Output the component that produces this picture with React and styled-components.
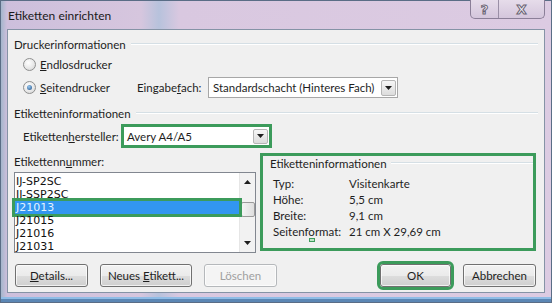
import React from "react";
import styled, { createGlobalStyle } from "styled-components";

const GlobalStyle = createGlobalStyle`
  html, body {
    margin: 0;
    padding: 0;
    background: #ffffff;
  }
  body {
    width: 552px;
    height: 303px;
    overflow: hidden;
    font-family: "Lato", "Liberation Sans", sans-serif;
    font-size: 11.5px;
    color: #1e1e1e;
  }
  * {
    box-sizing: border-box;
  }
`;

const GREEN = "#3c9b5b";

const Window = styled.div`
  width: 552px;
  height: 303px;
  display: flex;
  flex-direction: column;
  border: 1px solid #5a6d86;
  background: linear-gradient(
      90deg,
      #a4b6cc 0,
      #cdbfdc 6px,
      #d6c6de 140px,
      #b7c2dc 158px,
      #d9c8e0 178px,
      #dccbe2 100%
    );
  box-shadow: inset 0 -3px 0 #5b86b4, inset 0 -5px 0 #8fbce6;
`;

const TitleBar = styled.div`
  height: 28px;
  display: flex;
  justify-content: space-between;
  align-items: flex-start;
  padding-left: 7px;
`;

const Caption = styled.div`
  height: 28px;
  display: flex;
  align-items: center;
  font-size: 12px;
  color: #1a1a1a;
`;

const CaptionButtons = styled.div`
  display: flex;
  height: 19px;
  margin-top: -1px;
  margin-right: 6px;
  border: 1px solid #8b7f98;
  border-top: none;
  border-radius: 0 0 5px 5px;
  background: linear-gradient(#e6dcea, #d4c6dc);
  overflow: hidden;
`;

const CaptionButton = styled.div`
  width: ${(p) => p.$w}px;
  display: flex;
  align-items: center;
  justify-content: center;
  border-left: ${(p) => (p.$first ? "none" : "1px solid #9a8fa6")};
  font-family: "DejaVu Sans", sans-serif;
  font-weight: bold;
  font-size: ${(p) => p.$size}px;
  color: #f6f2f8;
  -webkit-text-stroke: 1px #6a6373;
`;

const Client = styled.div`
  flex: 1;
  margin: 0 6px 9px 6px;
  border: 1px solid #8593a6;
  background: #f0f0f0;
  padding: 6px 6px 0 6px;
  display: flex;
  flex-direction: column;
`;

const GroupHeader = styled.div`
  height: 16px;
  display: flex;
  align-items: center;
  gap: 5px;
  margin-top: ${(p) => p.$top || 0}px;
`;

const HeaderLine = styled.div`
  flex: 1;
  height: 2px;
  border-top: 1px solid #d5dfe5;
  border-bottom: 1px solid #ffffff;
`;

const Row = styled.div`
  display: flex;
  align-items: center;
  height: ${(p) => p.$h}px;
  margin-top: ${(p) => p.$top || 0}px;
  padding-left: 9px;
`;

const RadioLabel = styled.div`
  display: flex;
  align-items: center;
  gap: 4px;
  width: ${(p) => p.$w || 120}px;
`;

const RadioCircle = styled.span`
  width: 13px;
  height: 13px;
  border-radius: 50%;
  border: 1px solid #8e8f8f;
  background: radial-gradient(
    circle at 40% 35%,
    #ffffff 0,
    #e8e8e8 55%,
    #cfcfcf 100%
  );
  display: inline-flex;
  align-items: center;
  justify-content: center;
`;

const RadioDot = styled.span`
  width: 5px;
  height: 5px;
  border-radius: 50%;
  background: radial-gradient(circle at 40% 35%, #9ccaf0, #1d4f88);
`;

const U = styled.span`
  text-decoration: underline;
`;

const FieldLabel = styled.div`
  width: ${(p) => p.$w}px;
`;

const Select = styled.div`
  width: ${(p) => p.$w}px;
  height: ${(p) => p.$h}px;
  display: flex;
  align-items: center;
  justify-content: space-between;
  background: #ffffff;
  border: ${(p) => (p.$mark ? `3px solid ${GREEN}` : "1px solid #a7a7a7")};
  padding: 0 1px 0 ${(p) => (p.$mark ? 3 : 4)}px;
`;

const DropButton = styled.div`
  width: 15px;
  height: ${(p) => p.$h}px;
  display: flex;
  align-items: center;
  justify-content: center;
  border: 1px solid #b5b5b5;
  border-radius: 2px;
  background: linear-gradient(#f6f6f6, #dcdcdc);
`;

const Arrow = ({ up }) => (
  <svg width="7" height="4" viewBox="0 0 7 4">
    <path d={up ? "M0 4 L3.5 0 L7 4 Z" : "M0 0 L7 0 L3.5 4 Z"} fill="#1e1e1e" />
  </svg>
);

const Lower = styled.div`
  display: flex;
  gap: 4px;
  margin-top: 5px;
`;

const LeftColumn = styled.div`
  width: 242px;
  display: flex;
  flex-direction: column;
`;

const ListLabel = styled.div`
  height: 16px;
  display: flex;
  align-items: center;
`;

const ListBox = styled.div`
  margin-top: 3px;
  height: 81px;
  border: 1px solid #828790;
  background: #ffffff;
  display: flex;
`;

const Items = styled.div`
  flex: 1;
  padding-top: 2px;
  font-family: "DejaVu Sans", sans-serif;
  font-size: 11px;
`;

const Item = styled.div`
  height: 13px;
  line-height: 13px;
  padding-left: 1px;
  color: ${(p) => (p.$sel ? "#e4f3ff" : "#111111")};
  background: ${(p) => (p.$sel ? "#3296f0" : "transparent")};
  outline: ${(p) => (p.$sel ? `3px solid ${GREEN}` : "none")};
  position: relative;
`;

const ScrollBar = styled.div`
  width: 16px;
  display: flex;
  flex-direction: column;
  align-items: center;
  background: #f2f2f2;
  border-left: 1px solid #e6e6e6;
  padding: 7px 0 7px 0;
`;

const Thumb = styled.div`
  width: 14px;
  height: 15px;
  margin-top: 18px;
  border: 1px solid #9a9a9a;
  border-radius: 2px;
  background: linear-gradient(90deg, #f4f4f4, #dedede);
`;

const ScrollSpacer = styled.div`
  flex: 1;
`;

const InfoPanel = styled.div`
  position: relative;
  width: 276px;
  height: 98px;
  border: 3px solid ${GREEN};
  padding: 0 0 0 7px;
`;

const InfoTitle = styled.div`
  height: 14px;
  display: flex;
  align-items: center;
  gap: 4px;
`;

const InfoRows = styled.div`
  margin-top: 5px;
  padding-left: 3px;
`;

const InfoRow = styled.div`
  height: 16px;
  display: flex;
  align-items: center;
`;

const InfoKey = styled.div`
  width: 76px;
`;

const FocusMark = styled.div`
  position: absolute;
  left: 46px;
  top: 82px;
  width: 6px;
  height: 4px;
  border: 1.5px solid ${GREEN};
  background: #bfe5c8;
`;

const Buttons = styled.div`
  display: flex;
  align-items: center;
  margin-top: 11px;
  padding: 0 2px 0 1px;
  gap: 12px;
`;

const Button = styled.div`
  width: ${(p) => p.$w}px;
  height: 23px;
  display: flex;
  align-items: center;
  justify-content: center;
  border: 1px solid ${(p) => (p.$disabled ? "#b5b8bb" : "#707070")};
  border-radius: 3px;
  background: ${(p) =>
    p.$disabled
      ? "#f4f4f4"
      : "linear-gradient(#f2f2f2 0, #ebebeb 50%, #dddddd 51%, #cfcfcf 100%)"};
  color: ${(p) => (p.$disabled ? "#a0a0a0" : "#1e1e1e")};
  box-shadow: inset 0 0 0 1px rgba(255, 255, 255, 0.7);
  margin-left: ${(p) => (p.$push ? "auto" : "0")};
  outline: ${(p) => (p.$mark ? `3px solid ${GREEN}` : "none")};
`;

const listItems = ["IJ-SP2SC", "IJ-SSP2SC", "J21013", "J21015", "J21016", "J21031"];

const info = [
  ["Typ:", "Visitenkarte"],
  ["Höhe:", "5,5 cm"],
  ["Breite:", "9,1 cm"],
  ["Seitenformat:", "21 cm X 29,69 cm"],
];

export default function App() {
  return (
    <>
      <GlobalStyle />
      <Window>
        <TitleBar>
          <Caption>Etiketten einrichten</Caption>
          <CaptionButtons>
            <CaptionButton $w={27} $size={13} $first>
              ?
            </CaptionButton>
            <CaptionButton $w={46} $size={13}>
              X
            </CaptionButton>
          </CaptionButtons>
        </TitleBar>
        <Client>
          <GroupHeader>
            Druckerinformationen
            <HeaderLine />
          </GroupHeader>
          <Row $h={20} $top={2}>
            <RadioLabel>
              <RadioCircle />
              <span>
                <U>E</U>ndlosdrucker
              </span>
            </RadioLabel>
          </Row>
          <Row $h={21} $top={3}>
            <RadioLabel $w={114}>
              <RadioCircle>
                <RadioDot />
              </RadioCircle>
              <span>
                <U>S</U>eitendrucker
              </span>
            </RadioLabel>
            <FieldLabel $w={71}>
              Eingabe<U>f</U>ach:
            </FieldLabel>
            <Select $w={190} $h={21}>
              <span>Standardschacht (Hinteres Fach)</span>
              <DropButton $h={16}>
                <Arrow />
              </DropButton>
            </Select>
          </Row>
          <GroupHeader $top={7}>
            Etiketteninformationen
            <HeaderLine />
          </GroupHeader>
          <Row $h={24} $top={3}>
            <FieldLabel $w={98}>
              Etiketten<U>h</U>ersteller:
            </FieldLabel>
            <Select $w={151} $h={24} $mark>
              <span>Avery A4/A5</span>
              <DropButton $h={15}>
                <Arrow />
              </DropButton>
            </Select>
          </Row>
          <Lower>
            <LeftColumn>
              <ListLabel>
                Etikettenn<U>u</U>mmer:
              </ListLabel>
              <ListBox>
                <Items>
                  {listItems.map((it) => (
                    <Item key={it} $sel={it === "J21013"}>
                      {it}
                    </Item>
                  ))}
                </Items>
                <ScrollBar>
                  <Arrow up />
                  <Thumb />
                  <ScrollSpacer />
                  <Arrow />
                </ScrollBar>
              </ListBox>
            </LeftColumn>
            <InfoPanel>
              <InfoTitle>
                Etiketteninformationen
                <HeaderLine />
              </InfoTitle>
              <InfoRows>
                {info.map(([k, v]) => (
                  <InfoRow key={k}>
                    <InfoKey>{k}</InfoKey>
                    <span>{v}</span>
                  </InfoRow>
                ))}
              </InfoRows>
              <FocusMark />
            </InfoPanel>
          </Lower>
          <Buttons>
            <Button $w={73}>
              <span>
                <U>D</U>etails...
              </span>
            </Button>
            <Button $w={92}>
              <span>
                Neues <U>E</U>tikett...
              </span>
            </Button>
            <Button $w={73} $disabled>
              Löschen
            </Button>
            <Button $w={71} $push $mark>
              OK
            </Button>
            <Button $w={73}>Abbrechen</Button>
          </Buttons>
        </Client>
      </Window>
    </>
  );
}
